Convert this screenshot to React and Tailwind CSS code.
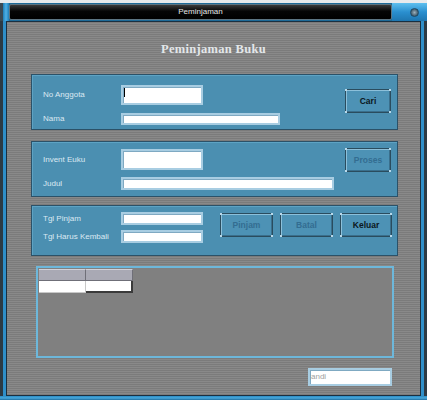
const STRIPES = "bg-[repeating-linear-gradient(180deg,#7b7b7b_0px,#7b7b7b_1px,#898989_1px,#898989_2px)]";
const LABEL = "text-[8px] text-[#dbe9f2] leading-none";
const INPUT = "bg-white border-2 border-[#a8cde2] shadow-[inset_1px_1px_0_#7fa9c2]";

function WinButton({ children, disabled, className = "" }) {
  return (
    <div className={`relative h-[24px] flex items-center justify-center bg-[#4d92b5] border border-[#2a4c5e] shadow-[inset_1px_1px_0_#8cc0da,inset_-1px_-1px_0_#3a6f8c] ${className}`}>
      <span className={`text-[8.5px] font-bold leading-none ${disabled ? "text-[#336d91]" : "text-[#0b1620]"}`}>{children}</span>
      <span className="absolute -left-px -top-px w-[2px] h-[2px] bg-[#b9d9ea]" />
      <span className="absolute -right-px -top-px w-[2px] h-[2px] bg-[#b9d9ea]" />
      <span className="absolute -left-px -bottom-px w-[2px] h-[2px] bg-[#b9d9ea]" />
      <span className="absolute -right-px -bottom-px w-[2px] h-[2px] bg-[#b9d9ea]" />
    </div>
  );
}

function Panel({ children, className = "" }) {
  return (
    <div className={`ml-[24px] w-[367px] bg-[#4b8fb1] border border-[#2b5168] shadow-[inset_1px_1px_0_#5da3c4] flex ${className}`}>
      {children}
    </div>
  );
}

export default function App() {
  return (
    <div className="w-[427px] h-[404px] bg-white font-['Liberation_Sans',Arial,sans-serif]">
      <div className="h-[3px] bg-[#e8eaec]" />
      {/* title bar */}
      <div className="h-[18px] flex bg-[#1d6a98]">
        <div className="w-[3px] bg-[#3a4a55]" />
        <div className="w-[6px] bg-[linear-gradient(90deg,#1f7fb8,#4fb0e6,#1f7fb8)]" />
        <div className="flex-1 my-[1px] rounded-[2px] bg-[linear-gradient(180deg,#3a3a3a,#050505_45%,#000)] border border-[#5c7482] flex items-center justify-center">
          <span className="text-[8px] text-[#e6e6e6] leading-none">Peminjaman</span>
        </div>
        <div className="w-[35px] bg-[linear-gradient(180deg,#5fc0ef,#2a8fcf_50%,#1e76b0)] flex items-center justify-end pr-[8px]">
          <div className="w-[9px] h-[9px] rounded-full bg-[radial-gradient(circle,#9ab0bd_0%,#4e6776_60%,#2c4352_100%)] border border-[#1d4a66]" />
        </div>
      </div>
      {/* body */}
      <div className="h-[375px] flex bg-[#1d6a98]">
        <div className="w-[3px] bg-[#2c3a44]" />
        <div className="w-[3px] bg-[#2f8fc9]" />
        <div className={`flex-1 border border-[#1a2f40] ${STRIPES} flex flex-col`}>
          <div className="h-[52px] flex items-center justify-center pt-[2px]">
            <span className="font-['Liberation_Serif',serif] font-bold text-[12.5px] text-[#e3e7ea] tracking-[0.3px]">Peminjaman Buku</span>
          </div>

          <Panel className="h-[56px] pt-[10px] pb-[5px] pl-[11px] pr-[6px]">
            <div className="flex flex-col gap-[8px]">
              <div className="flex items-center h-[20px]">
                <span className={`${LABEL} w-[78px]`}>No Anggota</span>
                <div className={`${INPUT} w-[82px] h-[20px] pl-[1px] pt-[1px]`}>
                  <div className="w-px h-[9px] bg-black" />
                </div>
              </div>
              <div className="flex items-center h-[12px]">
                <span className={`${LABEL} w-[78px]`}>Nama</span>
                <div className={`${INPUT} w-[159px] h-[12px]`} />
              </div>
            </div>
            <div className="flex-1" />
            <WinButton className="w-[46px] mt-[4px]">Cari</WinButton>
          </Panel>

          <Panel className="h-[56px] mt-[11px] pt-[7px] pb-[5px] pl-[11px] pr-[6px]">
            <div className="flex flex-col gap-[7px]">
              <div className="flex items-center h-[21px]">
                <span className={`${LABEL} w-[78px]`}>Invent Euku</span>
                <div className={`${INPUT} w-[82px] h-[21px]`} />
              </div>
              <div className="flex items-center h-[13px]">
                <span className={`${LABEL} w-[78px]`}>Judul</span>
                <div className={`${INPUT} w-[213px] h-[13px]`} />
              </div>
            </div>
            <div className="flex-1" />
            <WinButton disabled className="w-[46px] -mt-[1px]">Proses</WinButton>
          </Panel>

          <Panel className="h-[51px] mt-[8px] pt-[6px] pl-[11px] pr-[5px]">
            <div className="flex flex-col gap-[5px]">
              <div className="flex items-center h-[13px]">
                <span className={`${LABEL} w-[78px]`}>Tgl Pinjam</span>
                <div className={`${INPUT} w-[82px] h-[13px]`} />
              </div>
              <div className="flex items-center h-[13px]">
                <span className={`${LABEL} w-[78px]`}>Tgl Harus Kembali</span>
                <div className={`${INPUT} w-[82px] h-[13px]`} />
              </div>
            </div>
            <div className="flex-1" />
            <div className="flex gap-[7px] mt-[1px]">
              <WinButton disabled className="w-[53px]">Pinjam</WinButton>
              <WinButton disabled className="w-[53px]">Batal</WinButton>
              <WinButton className="w-[52px]">Keluar</WinButton>
            </div>
          </Panel>

          {/* table */}
          <div className="mt-[10px] ml-[29px] w-[358px] h-[92px] border-2 border-[#6db7da] bg-[#808080] p-[1px]">
            <div className="flex w-[94px]">
              <div className="w-[47px] h-[12px] bg-[#a9a9b4] border-r border-b border-[#6f6f78] border-t border-t-[#d0d0d8]" />
              <div className="w-[47px] h-[12px] bg-[#a9a9b4] border-r border-b border-[#6f6f78] border-t border-t-[#d0d0d8]" />
            </div>
            <div className="flex w-[94px]">
              <div className="w-[47px] h-[12px] bg-white border-r border-b border-[#c8c8c8]" />
              <div className="w-[47px] h-[12px] bg-white border-r-2 border-b-2 border-[#3a3a3a]" />
            </div>
          </div>

          <div className="flex justify-end mt-[10px] mr-[28px]">
            <div className={`${INPUT} w-[84px] h-[18px] flex items-center pl-[1px]`}>
              <span className="text-[8px] text-[#a0a0a0] leading-none">andi</span>
            </div>
          </div>
        </div>
        <div className="w-[3px] bg-[#2f8fc9]" />
        <div className="w-[3px] bg-[#2c3a44]" />
      </div>
      <div className="h-[4px] bg-[linear-gradient(180deg,#2a8bc4,#49a9dc,#1e6d9e)]" />
    </div>
  );
}
